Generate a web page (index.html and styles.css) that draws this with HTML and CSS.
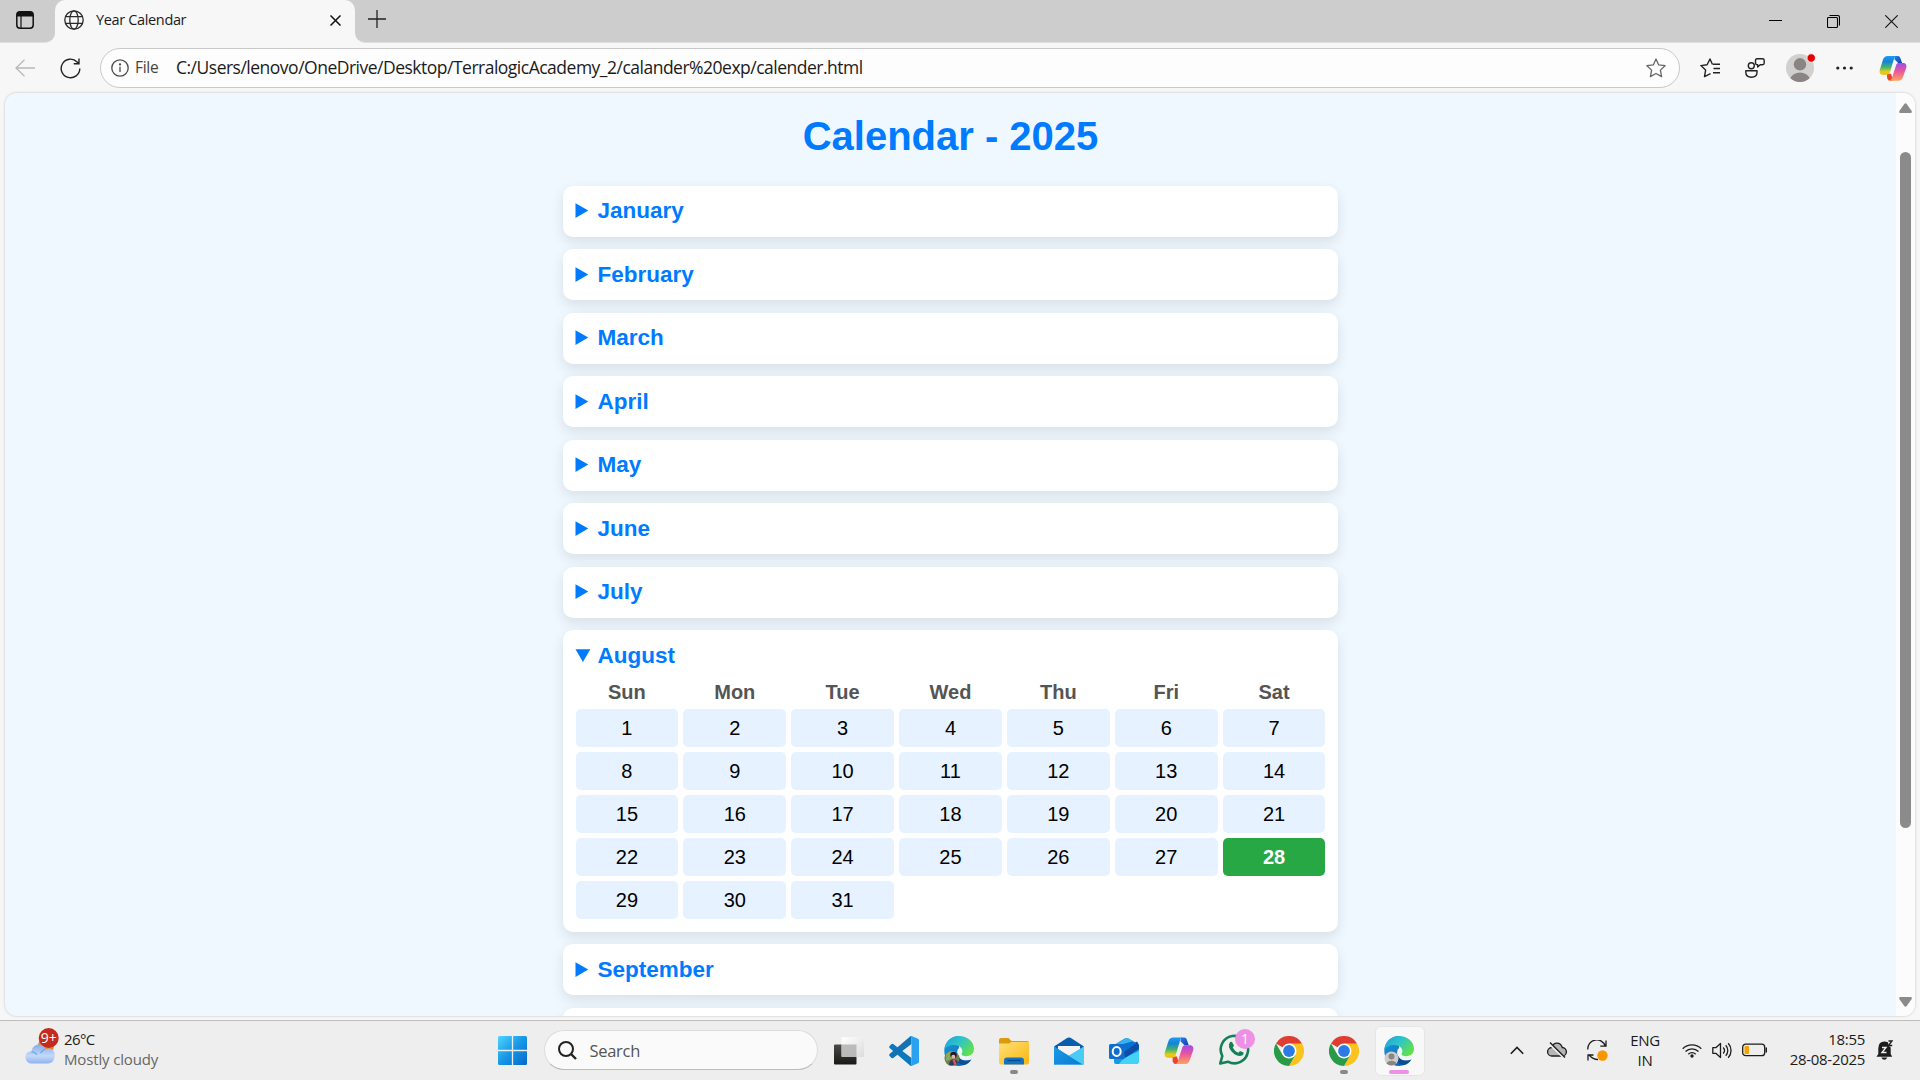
FILE: index.html
```html
<!DOCTYPE html>
<html lang="en">
<head>
<meta charset="utf-8">
<title>Year Calendar</title>
<link rel="stylesheet" href="styles.css">
</head>
<body>
<svg class="defs" width="0" height="0" aria-hidden="true">
  <defs>
    <linearGradient id="win" x1="0" y1="0" x2="1" y2="1"><stop offset="0" stop-color="#4fd5ff"/><stop offset=".5" stop-color="#1696e6"/><stop offset="1" stop-color="#0669c9"/></linearGradient>
    <linearGradient id="cpBlue" x1="0" y1="0" x2="0" y2="1"><stop offset="0" stop-color="#1b9cf0"/><stop offset=".3" stop-color="#1583d8"/><stop offset=".6" stop-color="#44b56a"/><stop offset=".85" stop-color="#e8ce18"/><stop offset="1" stop-color="#f5b80e"/></linearGradient>
    <linearGradient id="cpPink" x1="0" y1="0" x2="0" y2="1"><stop offset="0" stop-color="#a04be8"/><stop offset=".45" stop-color="#e8559f"/><stop offset="1" stop-color="#ffa35a"/></linearGradient>
    <linearGradient id="cpNavy" x1="0" y1="0" x2="1" y2="1"><stop offset="0" stop-color="#1a88e8"/><stop offset="1" stop-color="#1b35b0"/></linearGradient>
    <linearGradient id="edTeal" x1="0" y1="0" x2="1" y2=".6"><stop offset="0" stop-color="#1a9fe0"/><stop offset=".5" stop-color="#2ec4c8"/><stop offset="1" stop-color="#62e04c"/></linearGradient>
    <linearGradient id="edBlue" x1="0" y1="0" x2=".6" y2="1"><stop offset="0" stop-color="#1c9fe0"/><stop offset="1" stop-color="#0a67b8"/></linearGradient>
    <linearGradient id="fold" x1="0" y1="0" x2="1" y2="1"><stop offset="0" stop-color="#ffe07a"/><stop offset="1" stop-color="#fcb60c"/></linearGradient>
    <linearGradient id="mail" x1="0" y1="0" x2="1" y2="1"><stop offset="0" stop-color="#1b9be8"/><stop offset="1" stop-color="#0c7ad0"/></linearGradient>
    <linearGradient id="cloud" x1="0" y1="0" x2="0" y2="1"><stop offset="0" stop-color="#86aee9"/><stop offset=".6" stop-color="#c3d9f8"/><stop offset="1" stop-color="#8fb2ee"/></linearGradient>
    <linearGradient id="dark" x1="0" y1="0" x2="0" y2="1"><stop offset="0" stop-color="#4a4a48"/><stop offset="1" stop-color="#181818"/></linearGradient>
    <linearGradient id="glass" x1="0" y1="0" x2="1" y2="1"><stop offset="0" stop-color="#fff"/><stop offset="1" stop-color="#dcdcdc"/></linearGradient>
    <symbol id="copilot" viewBox="0 0 30 28">
      <path d="M17 0.5h3.2c1.6 0 2.3 1.1 2.8 2.7l1.7 5H20.500l-4-4z" fill="url(#cpNavy)"/>
      <path d="M8.500 19.500h4.500l2 7.500h-3.500c-1.600 0-2.300-1.200-2.800-2.800z" fill="#e9452c"/>
      <path d="M9.300 0.500H19c-1.800 0-2.500 1.700-3 3.300l-4.200 14c-.6 1.900-1.600 2.900-3.400 2.900H4.200C1 20.700.1 18.200.8 15.600L4.400 4.200C5.200 1.800 6.700.5 9.300.5z" fill="url(#cpBlue)"/>
      <path d="M20.700 27H11c1.800 0 2.500-1.700 3-3.300l4.200-13c.6-1.900 1.600-2.500 3.400-2.500h4.200c3.200 0 4.100 2.500 3.400 5.100l-3.600 10.100c-.8 2.400-2.300 3.600-4.900 3.600z" fill="url(#cpPink)"/>
    </symbol>
    <symbol id="edge" viewBox="0 0 30 30">
      <path d="M.3 15C.3 6.500 6.800 0 15 0v14c-2 1-2.200 4-.8 6.400 2.300 4 7 5.300 12.600 3.400C24 28 19.700 30 15 30 6.700 30 .3 23.400.3 15z" fill="url(#edBlue)"/>
      <path d="M10.500 19c.5 6 4.500 10 9.500 10 3.500-1 6-3 7.400-5.600-6 2.600-12 1-13.200-4.400z" fill="#0d4d98"/>
      <path d="M.3 14C1 6 7 0 15 0c8.500 0 15 5.800 15 12.800 0 4.800-3.300 7.600-7.700 7.600-3.600 0-5.300-1.300-5-2.300.2-.8 1-1.200 1-3.100 0-2.900-3-6-8-6C5.500 9 1.600 11 .3 14z" fill="url(#edTeal)"/>
      <path d="M15 12.300c2.200.2 3.300 1.500 3.300 3-.2 1.800-1 2-.9 3 .2 1.400 2 2.300 5.200 2.100 1.800-.2 4-1 5.200-2.300-.5 3-2 4.500-4.500 5-5 1-9-1.400-9.700-5.100-.4-2.300-.5-5 1.400-5.700z" fill="#f1f5f7"/>
    </symbol>
    <symbol id="chrome" viewBox="0 0 30 30">
      <path d="M15 15L2 7.500A15 15 0 0 1 28 7.500z" fill="#e03c31"/>
      <path d="M15 7.500h13A15 15 0 0 1 15 30l6.500-11.200z" fill="#fcc31c"/>
      <path d="M2 7.500A15 15 0 0 0 15 30l6.500-11.200L15 15l-6.500 3.700z" fill="#2a9a48"/>
      <circle cx="15" cy="15" r="7.500" fill="#fff"/><circle cx="15" cy="15" r="5.900" fill="#2c7be5"/>
    </symbol>
  </defs>
</svg>
<div class="window">
  <header class="tabstrip">
    <div class="tab-actions">
      <svg width="18" height="18" viewBox="0 0 18 18"><rect x=".8" y=".8" width="16.400" height="16.400" rx="3.200" fill="none" stroke="#111" stroke-width="1.500"/><path d="M.8 5.500V4Q.8.8 4 .8h10q3.200 0 3.200 3.200v1.500z" fill="#111"/><path d="M5 5v12" stroke="#111" stroke-width="1.200"/></svg>
    </div>
    <div class="tab">
      <svg width="20" height="20" viewBox="0 0 20 20" fill="none" stroke="#2a2a2a" stroke-width="1.300"><circle cx="10" cy="10" r="9.200"/><ellipse cx="10" cy="10" rx="4.200" ry="9.200"/><path d="M1.600 6.700h16.800M1.600 13.300h16.800"/></svg>
      <span class="tab-title">Year Calendar</span>
      <svg width="11" height="11" viewBox="0 0 11 11" stroke="#111" stroke-width="1.500"><path d="M.5.5l10 10M10.500.5l-10 10"/></svg>
    </div>
    <div class="tab-rest">
      <svg width="18" height="18" viewBox="0 0 18 18" stroke="#222" stroke-width="1.300"><path d="M9 0v18M0 9h18"/></svg>
      <div class="controls">
        <svg width="13" height="13" viewBox="0 0 13 13" stroke="#000"><path d="M0 5.500h13"/></svg>
        <svg width="13" height="13" viewBox="0 0 13 13" fill="none" stroke="#000" stroke-width="1.100"><rect x=".5" y="2.500" width="10" height="10" rx="1"/><path d="M2.500.500h8q2 0 2 2v8"/></svg>
        <svg width="13" height="13" viewBox="0 0 13 13" stroke="#111" stroke-width="1.100"><path d="M.3.3l12.400 12.400M12.700.3L.3 12.700"/></svg>
      </div>
    </div>
  </header>
  <nav class="toolbar">
    <svg class="back" width="20" height="18" viewBox="0 0 20 18" fill="none" stroke="#b9b9b9" stroke-width="1.300"><path d="M9.500.7L1 9l8.500 8.300M1 9h19"/></svg>
    <svg class="reload" width="21" height="21" viewBox="0 0 21 21" fill="none" stroke="#222" stroke-width="1.400"><path d="M19.800 10.500a9.300 9.300 0 1 1-2.700-6.600l1.900 1.900M19 .5v5.300h-5.300"/></svg>
    <div class="address">
      <svg width="18" height="18" viewBox="0 0 18 18" fill="none" stroke="#4b4b4b" stroke-width="1.300"><circle cx="9" cy="9" r="8.200"/><path d="M9 7.800v5.200"/><circle cx="9" cy="5.400" r=".5" fill="#4b4b4b"/></svg>
      <span class="scheme">File</span>
      <span class="url">C:/Users/lenovo/OneDrive/Desktop/TerralogicAcademy_2/calander%20exp/calender.html</span>
      <svg class="star" width="20" height="20" viewBox="0 0 20 20" fill="none" stroke="#666" stroke-width="1.300" stroke-linejoin="round"><path d="M10 1l2.700 5.900 6.400.8-4.700 4.400 1.200 6.500L10 15.500l-5.600 3.100 1.200-6.500L.9 7.700l6.400-.8z"/></svg>
    </div>
    <div class="tools">
      <svg width="20" height="20" viewBox="0 0 20 20" fill="none" stroke="#222" stroke-width="1.400" stroke-linejoin="round"><path d="M10.500 15.700l-6 2.900 1.100-6.500L.9 7.600l6.200-.8L10 1l2.500 5.500M13 6.300h7M13.500 10.500H20M13 14.700h7"/></svg>
      <svg width="20" height="20" viewBox="0 0 20 20" fill="none" stroke="#222" stroke-width="1.400" stroke-linejoin="round"><circle cx="6.300" cy="7.700" r="3"/><path d="M.8 12.700h11.200v1.500c0 3.300-2.400 5-5.600 5s-5.600-1.700-5.600-5zM12 .8h5.500q1.700 0 1.700 1.700V5q0 1.700-1.700 1.700h-2.300L12.700 9V6.700h-.7q-1.500 0-1.500-1.700V2.500Q10.500.8 12 .8z"/></svg>
      <svg class="avatar" width="30" height="30" viewBox="0 0 30 30"><circle cx="14" cy="16" r="14" fill="#d2d0ce"/><circle cx="14" cy="12.300" r="6.200" fill="#8a8582"/><path d="M4.400 26.200a9.800 7 0 0 1 19.200 0A14 14 0 0 1 4.400 26.200z" fill="#8a8582"/><circle cx="25.200" cy="6" r="4.200" fill="#e60000" stroke="#f7f7f7" stroke-width=".8"/></svg>
      <svg width="17" height="4" viewBox="0 0 17 4" fill="#222"><circle cx="1.800" cy="2" r="1.600"/><circle cx="8.500" cy="2" r="1.600"/><circle cx="15.200" cy="2" r="1.600"/></svg>
      <svg width="28" height="27"><use href="#copilot"/></svg>
    </div>
  </nav>
  <div class="viewport">
    <main class="page">
      <h1>Calendar - 2025</h1>
      <details class="month"><summary><span>January</span></summary></details>
      <details class="month"><summary><span>February</span></summary></details>
      <details class="month"><summary><span>March</span></summary></details>
      <details class="month"><summary><span>April</span></summary></details>
      <details class="month"><summary><span>May</span></summary></details>
      <details class="month"><summary><span>June</span></summary></details>
      <details class="month"><summary><span>July</span></summary></details>
      <details class="month" open>
        <summary><span>August</span></summary>
        <div class="days">
          <b>Sun</b><b>Mon</b><b>Tue</b><b>Wed</b><b>Thu</b><b>Fri</b><b>Sat</b>
          <span>1</span><span>2</span><span>3</span><span>4</span><span>5</span><span>6</span><span>7</span>
          <span>8</span><span>9</span><span>10</span><span>11</span><span>12</span><span>13</span><span>14</span>
          <span>15</span><span>16</span><span>17</span><span>18</span><span>19</span><span>20</span><span>21</span>
          <span>22</span><span>23</span><span>24</span><span>25</span><span>26</span><span>27</span><span class="today">28</span>
          <span>29</span><span>30</span><span>31</span>
        </div>
      </details>
      <details class="month"><summary><span>September</span></summary></details>
      <details class="month"><summary></summary></details>
    </main>
    <div class="scrollbar">
      <svg width="13" height="10" viewBox="0 0 13 10"><path d="M5.300 1q1.200-1.500 2.400 0l5 7q.5 2-1 2H1.300q-1.500 0-1-2z" fill="#8b8b8b"/></svg>
      <div class="thumb"></div>
      <svg width="13" height="10" viewBox="0 0 13 10"><path d="M5.300 9q1.200 1.500 2.400 0l5-7q.5-2-1-2H1.300q-1.500 0-1 2z" fill="#8b8b8b"/></svg>
    </div>
  </div>
</div>
<footer class="taskbar">
  <div class="weather">
    <svg width="36" height="38" viewBox="0 0 36 38"><circle cx="22" cy="19" r="8" fill="#f58220"/><path d="M7 36.500a6.200 6.200 0 0 1-1.500-12q1.500 0 2 .1C8 20 11.500 17.500 15 17.500q4.500 0 6.500 4.500 2.500-1 5-.3a6.500 6.500 0 0 1 4 8.300q-1 6.500-6.500 6.500z" fill="url(#cloud)"/><path d="M7.500 24.600q3 .2 5.500 3M21.500 22q-3.500 1-5 4" stroke="#769fe0" stroke-width="1.200" fill="none"/><circle cx="24.700" cy="11" r="10" fill="#c42b1c"/><text x="24.700" y="16" class="badge-text" text-anchor="middle">9+</text></svg>
    <div class="weather-text"><div class="temp">26°C</div><div class="cond">Mostly cloudy</div></div>
  </div>
  <div class="apps">
    <div class="app"><svg width="29" height="29" viewBox="0 0 29 29" fill="url(#win)"><path d="M1.500 0h26Q29 0 29 1.500v26q0 1.500-1.500 1.500h-26Q0 29 0 27.500v-26Q0 0 1.500 0z"/><path d="M14.500 0v29M0 14.500h29" stroke="#eee" stroke-width="1.300"/></svg></div>
    <div class="search">
      <svg width="19" height="19" viewBox="0 0 19 19" fill="none" stroke="#222" stroke-width="2"><circle cx="8" cy="8" r="7"/><path d="M13 13l5 5" stroke-width="2.400"/></svg>
      <span>Search</span>
    </div>
    <div class="app"><svg width="30" height="30" viewBox="0 0 30 30"><rect x="0" y="8.500" width="22.500" height="20" rx="1" fill="url(#dark)"/><rect x="7.500" y="1" width="22.500" height="20" rx="1" fill="url(#glass)"/><path d="M7.500 8.500h15V21h-15z" fill="#a9a9a8" opacity=".75"/></svg></div>
    <div class="app"><svg width="30" height="30" viewBox="0 0 30 30"><path d="M.6 10l2-2q.8-.5 1.600 0L22.500 22v7.500q-1 .5-2-.5L.6 12q-.8-1 0-2z" fill="#0d79bd"/><path d="M.6 20l2 2q.8.500 1.600 0L22.500 8V.5q-1-.5-2 .5L.6 18q-.8 1 0 2z" fill="#1172b4"/><path d="M22.500 0l6.500 2.800q1 .5 1 1.500v21.400q0 1-1 1.500L22.500 30q-1.200.2-2-1 2 .5 2-1.500v-25q0-2-2-1.500.8-1.200 2-1z" fill="#29a3ef"/></svg></div>
    <div class="app"><svg width="30" height="30" viewBox="0 0 30 30"><use href="#edge"/><circle cx="8" cy="22.500" r="7.500" fill="#6c8054"/><path d="M2 18q4-5 10-2l-4 7-6 2z" fill="#88a85c"/><circle cx="9.500" cy="19" r="3.200" fill="#211a2e"/><circle cx="9.300" cy="20.700" r="2" fill="#e9b79c"/><path d="M5 29q0-5 4.500-6 4.500 1 4.500 4-3 3-9 2z" fill="#313c57"/><path d="M8.500 24l2 5 2-1-2-5z" fill="#e9545e"/></svg></div>
    <div class="app"><svg width="30" height="30" viewBox="0 0 30 30"><path d="M0 4q0-2 2-2h7.500l3 3H28q2 0 2 2v5H0z" fill="#dc9a0d"/><path d="M0 7.500h10l2-1.500h18v20q0 2.500-2 2.500H2q-2 0-2-2.500z" fill="url(#fold)"/><path d="M5 28.500v-4q0-3 3-3h14q3 0 3 3v4z" fill="#1272c6"/><path d="M8.500 24.500h13" stroke="#074a8b" stroke-width="1.200"/></svg><i class="dot"></i></div>
    <div class="app"><svg width="30" height="30" viewBox="0 0 30 30"><path d="M0 10.500L13.500 1.800q1.500-.8 3 0L30 10.500l-5 6H5z" fill="#0a5cac"/><path d="M4 10h22v8l-11 8-11-8z" fill="#f4f4f4"/><path d="M0 10.500l15 9.500 15-9.500V28.500H0z" fill="#2aa9ee"/><path d="M30 10.500v17q0 1-1 1H28L11 18l4 1.500z" fill="#48ccf5"/><path d="M0 28.500V10.500L28.500 28.500z" fill="url(#mail)"/></svg></div>
    <div class="app"><svg width="30" height="30" viewBox="0 0 30 30"><path d="M5 9L16 2.300q1.500-.8 3 0L30 9v17l-2 2H7q-2 0-2-2z" fill="#159be0"/><path d="M8 8l9-5.700q1.500-.5 2.500.3L26 6 12 15z" fill="#35b3ee"/><path d="M13 14L28 5.500q1.500 2 2 4.500v3L16 22z" fill="#0b4da8"/><path d="M14 8l9-2.500 4.500 1.500L15 16z" fill="#0a70cf"/><path d="M10 28q3-6 20-13v10q0 3-3 3z" fill="#44d2f6"/><rect x="0" y="8" width="15.500" height="15" rx="1.500" fill="#0e6fd0"/><ellipse cx="7.700" cy="15.500" rx="4" ry="4.400" fill="none" stroke="#fff" stroke-width="2"/></svg></div>
    <div class="app"><svg width="30" height="28"><use href="#copilot"/></svg></div>
    <div class="app"><svg class="over" width="37" height="36" viewBox="0 0 37 36"><path d="M1.200 34.600l2.100-7.600A13.700 13.700 0 1 1 9 32.700z" fill="none" stroke="#158058" stroke-width="2.600" stroke-linejoin="round"/><path d="M10.500 14q1-1.600 2.500-1l2 3.600-1.300 2q2 4 5.600 5.200l1.700-1.800 3.500 1.600q.5 1.600-1 2.700-3.500 2-8-1-4-3-5.300-6.500-.8-2.500.3-4.800z" fill="#158058"/><circle cx="26" cy="10" r="10" fill="#ee90e5"/><text x="26" y="15" class="badge-text" text-anchor="middle">1</text></svg></div>
    <div class="app"><svg width="30" height="30"><use href="#chrome"/></svg></div>
    <div class="app"><svg width="30" height="30"><use href="#chrome"/></svg><i class="dot"></i></div>
    <div class="app active"><svg width="30" height="30" viewBox="0 0 30 30"><use href="#edge"/><circle cx="7.500" cy="22.500" r="7" fill="#cfcdcb"/><circle cx="7.500" cy="20.500" r="3" fill="#8a8582"/><path d="M2.500 27.500a5.300 4 0 0 1 10 0 7 7 0 0 1-10 0z" fill="#8a8582"/></svg><i class="dot wide"></i></div>
  </div>
  <div class="tray">
    <svg class="chev" width="14" height="9" viewBox="0 0 14 9" fill="none" stroke="#1d1d1d" stroke-width="1.600"><path d="M.8 7.800L7 1.500l6.200 6.300"/></svg>
    <svg class="cloud" width="20" height="18" viewBox="0 0 20 18"><path d="M5 15a4.200 4.200 0 0 1-.3-8.500Q6 2.200 10 2.200t5.300 4.300A4.200 4.200 0 0 1 15 15z" fill="#b5b5b5" stroke="#1d1d1d" stroke-width="1.300"/><path d="M2 2l15.500 15" stroke="#eee" stroke-width="3"/><path d="M3 1.500l15 15" stroke="#1d1d1d" stroke-width="1.400"/></svg>
    <svg class="sync" width="21" height="21" viewBox="0 0 21 21" fill="none" stroke="#1d1d1d" stroke-width="1.300"><path d="M.8 9.500a9 9 0 0 1 17.500-3.500M19 .5v5.700h-5.700M11 19.500Q6.500 19.800 2 15M1 20.500V15h5.500"/><circle cx="15.500" cy="15.500" r="5.200" fill="#fb9600" stroke="none"/></svg>
    <div class="lang"><div>ENG</div><div>IN</div></div>
    <svg class="wifi" width="20" height="15" viewBox="0 0 20 15" fill="none" stroke="#1d1d1d" stroke-width="1.300"><path d="M.7 5.700a13 13 0 0 1 18.600 0M3.500 8.500a9.200 9.200 0 0 1 13 0M6.300 11.200a5.300 5.300 0 0 1 7.400 0"/><circle cx="10" cy="13" r="1.700" fill="#1d1d1d" stroke="none"/></svg>
    <svg class="snd" width="20" height="17" viewBox="0 0 20 17" fill="none" stroke="#1d1d1d" stroke-width="1.300" stroke-linejoin="round"><path d="M.8 5.700h3L8.500 1.500v14l-4.700-4.200h-3zM11.200 5.500a4.500 4.500 0 0 1 0 6M13.700 3.300a7.500 7.500 0 0 1 0 10.400M16.200 1.300a10.500 10.500 0 0 1 0 14.400"/></svg>
    <svg class="bat" width="25" height="14" viewBox="0 0 25 14"><rect x=".7" y="1.200" width="22" height="11.500" rx="3" fill="none" stroke="#1d1d1d" stroke-width="1.300"/><rect x="2.500" y="3" width="4.500" height="8" rx="1" fill="#f5a300"/><path d="M24.300 4.500v5" stroke="#1d1d1d" stroke-width="1.500"/></svg>
    <div class="clock"><div class="time">18:55</div><div class="date">28-08-2025</div></div>
    <svg class="bell" width="18" height="20" viewBox="0 0 18 20"><path d="M2.300 14V8.500Q2.300 1.500 8.500 1.500t6.200 7V14l1.500 2.800H.5z" fill="#1d1d1d"/><path d="M5.300 17.500h6q-1 2.300-3 2.300t-3-2.300z" fill="#1d1d1d"/><path d="M11.500 0h6.500v6.500h-5z" fill="#eee"/><path d="M6 7.500h4l-4 5h4.500" fill="none" stroke="#eee" stroke-width="1.400"/><path d="M12.500 1h3.500l-3.500 4.500h3.700" fill="none" stroke="#1d1d1d" stroke-width="1.300"/></svg>
  </div>
</footer>
</body>
</html>
```
FILE: styles.css
```css
* { box-sizing: border-box; }
body {
  margin: 0;
  height: 1080px;
  overflow: hidden;
  display: flex;
  flex-direction: column;
  background: #f7f7f7;
  font-family: "Open Sans", "Noto Sans", sans-serif;
  color: #1b1b1b;
}
svg { display: block; flex: none; }
.defs { position: absolute; }
.window { height: 1020px; display: flex; flex-direction: column; }

/* tab strip */
.tabstrip { height: 43px; display: flex; background: #f7f7f7; }
.tab-actions {
  width: 55px; padding: 11px 0 0 16px;
  background: #cdcdcd; border-bottom: 1px solid #e0e0e0;
  border-bottom-right-radius: 10px;
}
.tab {
  width: 300px; padding: 0 14px 3px 9px;
  display: flex; align-items: center;
  background: linear-gradient(#cdcdcd, #cdcdcd) 0 0 / 100% 12px no-repeat;
  position: relative; z-index: 0;
}
.tab::before {
  content: ""; position: absolute; inset: 0; z-index: -1;
  background: #f7f7f7; border-radius: 10px 10px 0 0;
}
.tab-title { flex: 1; margin-left: 12px; padding-bottom: 2px; font-size: 14.500px; letter-spacing: -0.350px; white-space: nowrap; }
.tab-rest {
  flex: 1; display: flex; justify-content: space-between;
  padding: 10px 22px 0 13px;
  background: #cdcdcd; border-bottom: 1px solid #e0e0e0;
  border-bottom-left-radius: 10px;
}
.controls { display: flex; gap: 45px; padding-top: 5px; }

/* toolbar */
.toolbar { height: 50px; display: flex; align-items: center; padding: 0 13px 0 15px; }
.reload { margin-left: 25px; }
.address {
  width: 1580px; height: 40px; margin-left: 19px; padding: 0 13px 0 10px;
  display: flex; align-items: center;
  border: 1px solid #c9c9c9; border-radius: 20px; background: #fdfdfd;
}
.scheme { width: 41px; margin-left: 6px; padding-bottom: 2px; font-size: 15.500px; letter-spacing: -0.300px; color: #444; }
.url { flex: 1; padding-bottom: 2px; font-size: 17.500px; letter-spacing: -0.500px; white-space: nowrap; }
.tools { flex: 1; display: flex; align-items: center; margin-left: 20px; }
.tools svg:nth-child(2) { margin-left: 25px; }
.tools .avatar { margin: -2px 0 0 21px; }
.tools svg:nth-child(4) { margin-left: 20px; }
.tools svg:nth-child(5) { margin-left: auto; }

/* page */
.viewport {
  height: 923px; margin: 0 5px; display: flex; overflow: hidden;
  border-radius: 12px; background: #f0f8ff;
  box-shadow: 0 0 2px 1px #dedede;
}
.page {
  flex: 1; padding: 20px 0 0 558px; overflow: hidden;
  font-family: "Liberation Sans", Arial, sans-serif; font-size: 20px; color: #000;
}
h1 { width: 775px; margin: 0 0 26.500px; font-size: 40px; line-height: 46px; text-align: center; color: #007bff; }
.month {
  width: 775px; margin-bottom: 12.500px; padding: 12.500px;
  min-height: 51px;
  border-radius: 10px; background: #fff;
  box-shadow: 0 5px 12.500px rgba(0, 0, 0, 0.1);
}
summary { height: 26px; line-height: 25px; font-size: 22.500px; font-weight: bold; color: #007bff; }
summary span { margin-left: -1.900px; }
.days { display: grid; grid-template-columns: repeat(7, 1fr); gap: 5px; margin-top: 12.500px; text-align: center; line-height: 23px; }
.days b { color: #555; }
.days span { padding: 7.500px 0; border-radius: 5px; background: #e6f2ff; }
.days .today { background: #28a745; color: #fff; font-weight: bold; }
.scrollbar { width: 19px; padding: 10px 0 9px 3px; display: flex; flex-direction: column; background: #fcfcfc; }
.thumb { width: 11px; height: 676px; margin: 39px 0 auto 1px; border-radius: 6px; background: #8b8b8b; }

/* taskbar */
.taskbar { height: 60px; display: flex; align-items: stretch; border-top: 1px solid #bdbdbd; background: #eee; }
.weather { width: 484.500px; display: flex; padding: 6px 0 0 24px; }
.weather-text { margin-left: 4px; padding-top: 2px; font-size: 15px; line-height: 20px; }
.temp { letter-spacing: -0.600px; }
.cond { color: #666; letter-spacing: -0.150px; }
.badge-text { font: 14px "Open Sans", sans-serif; fill: #fff; }
.apps { display: flex; }
.app { width: 55px; display: flex; align-items: center; justify-content: center; position: relative; }
.over { position: absolute; left: 12px; top: 8px; }
.dot { position: absolute; left: 23.500px; top: 49px; width: 8px; height: 4px; border-radius: 2px; background: #888; }
.dot.wide { left: 17.500px; width: 20px; background: #ee90e5; }
.app.active::before {
  content: ""; position: absolute; left: 3.500px; top: 5px; width: 48px; height: 48px;
  border-radius: 6px; background: #f8f8f8; border: 1px solid #e6e6e6;
}
.active svg { position: relative; }
.search {
  width: 274px; height: 40px; margin: 9px 3.500px 0 4.500px; padding: 0 13px;
  display: flex; align-items: center; gap: 12.500px;
  border: 1px solid #dcdcdc; border-bottom-color: #bbb; border-radius: 20px; background: #fafafa;
  font-size: 16.500px; letter-spacing: -0.300px; color: #555;
}
.tray { flex: 1; display: flex; align-items: center; padding-bottom: 1px; font-size: 15px; line-height: 20px; }
.chev { margin-left: 83.500px; }
.cloud { margin-left: 23px; }
.sync { margin-left: 20px; }
.lang { width: 60px; margin-left: 7px; padding-bottom: 1px; text-align: center; letter-spacing: -0.300px; }
.wifi { margin-left: 7px; }
.snd { margin-left: 10px; }
.bat { margin-left: 10px; }
.clock { width: 98px; padding-bottom: 2px; text-align: right; letter-spacing: -0.300px; }
.bell { margin-left: 11px; }
```
